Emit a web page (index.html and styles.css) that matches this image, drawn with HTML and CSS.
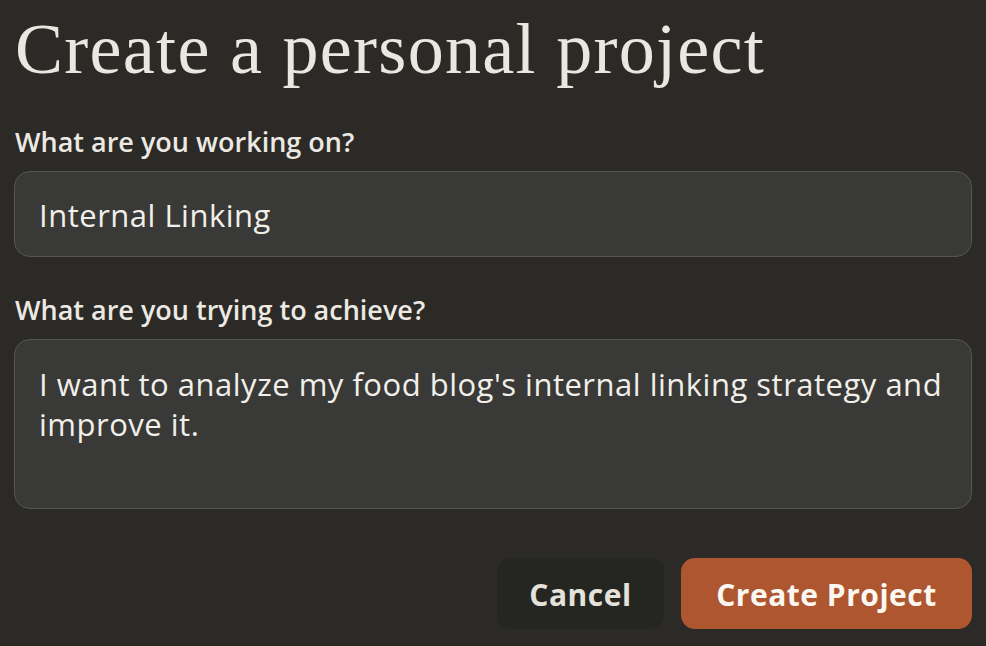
FILE: index.html
```html
<!DOCTYPE html>
<html>
<head>
<meta charset="utf-8">
<link rel="stylesheet" href="styles.css">
</head>
<body>
<main class="dialog">
  <h1 class="title">Create a personal project</h1>
  <label class="label" for="name">What are you working on?</label>
  <input class="field" id="name" type="text" value="Internal Linking">
  <label class="label label-second" for="goal">What are you trying to achieve?</label>
  <textarea class="field area" id="goal">I want to analyze my food blog's internal linking strategy and improve it.</textarea>
  <div class="actions">
    <button class="btn btn-cancel" type="button">Cancel</button>
    <button class="btn btn-primary" type="button">Create Project</button>
  </div>
</main>
</body>
</html>
```
FILE: styles.css
```css
html, body {
  margin: 0;
  padding: 0;
  background: #2b2a27;
  height: 100%;
  overflow: hidden;
}
.dialog {
  display: flex;
  flex-direction: column;
  padding: 9px 14px 0 14px;
  font-family: "Open Sans", Lato, sans-serif;
  color: #ebe9e2;
}
.title {
  margin: 0;
  font-family: "Liberation Serif", serif;
  font-weight: 400;
  font-size: 72px;
  line-height: 80px;
  letter-spacing: 1.3px;
  color: #e9e7e0;
  padding-left: 1px;
}
.label {
  margin-top: 36px;
  font-weight: 600;
  font-size: 27px;
  line-height: 34px;
  padding-left: 1px;
}
.label-second {
  margin-top: 36px;
}
.field {
  box-sizing: border-box;
  width: 100%;
  margin: 0;
  height: 86px;
  margin-top: 12px;
  background: #393937;
  border: 1.5px solid #56554e;
  border-radius: 16px;
  padding: 2px 24px 0 24px;
  font-family: "Open Sans", Lato, sans-serif;
  font-size: 31px;
  letter-spacing: 0.5px;
  color: #f1efe9;
  outline: none;
}
.area {
  height: 170px;
  resize: none;
  overflow: hidden;
  padding: 24px 24px;
  line-height: 40px;
}
.actions {
  display: flex;
  justify-content: flex-end;
  gap: 17px;
  margin-top: 49px;
}
.btn {
  height: 71px;
  border: none;
  border-radius: 14px;
  font-family: "Open Sans", Lato, sans-serif;
  font-weight: 700;
  font-size: 30px;
  letter-spacing: 0.5px;
  padding: 2px 0 0 0;
  cursor: pointer;
}
.btn-cancel {
  width: 167px;
  background: #252522;
  color: #e4e2db;
}
.btn-primary {
  width: 291px;
  background: #ae5630;
  color: #fbf8f2;
}
```
